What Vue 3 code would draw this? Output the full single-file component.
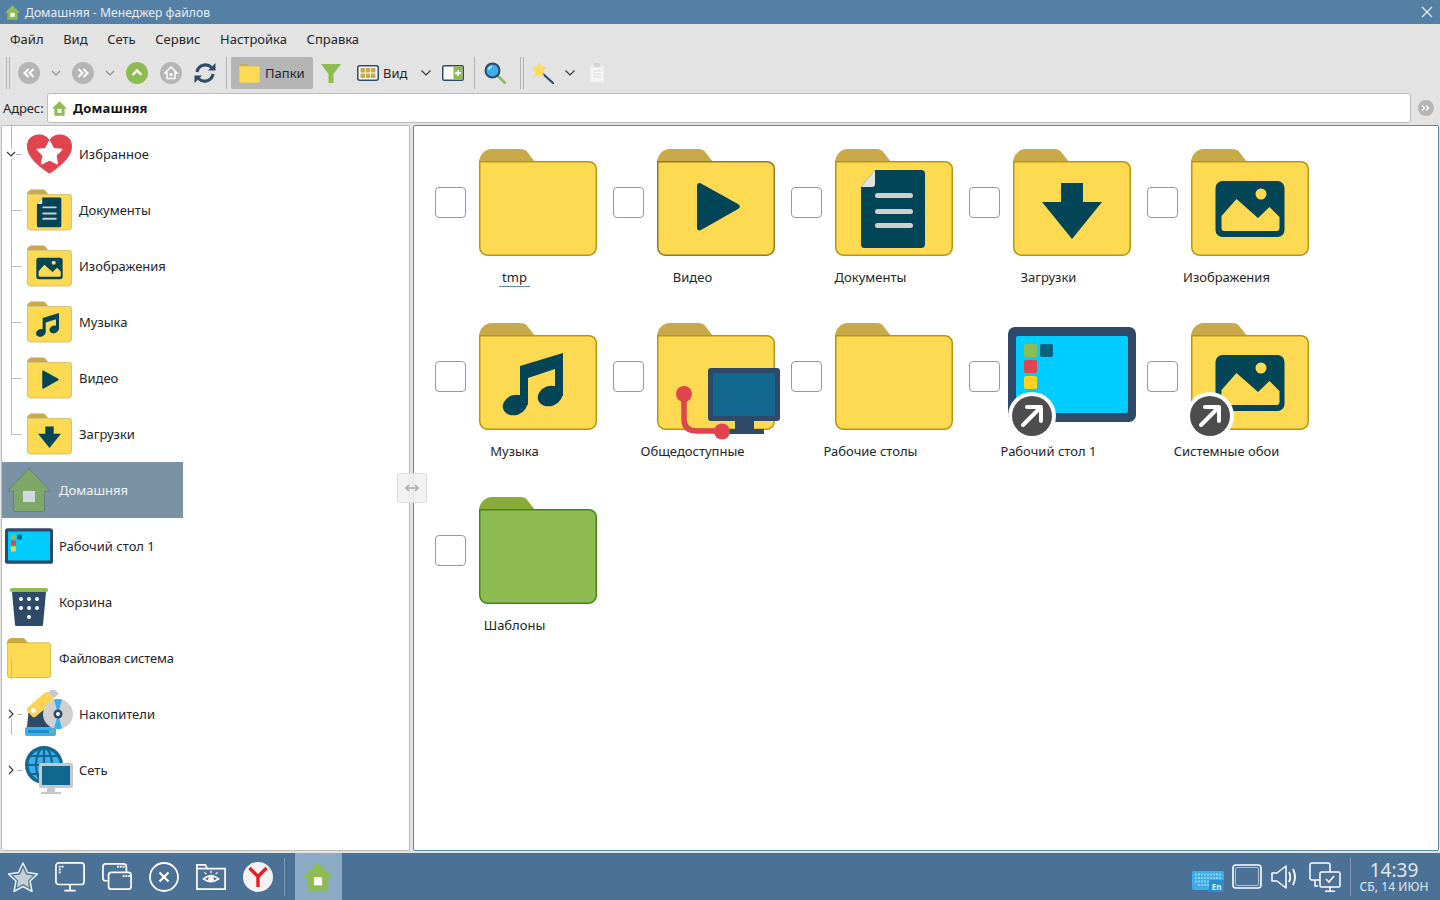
<script setup>
const menu = ['Файл', 'Вид', 'Сеть', 'Сервис', 'Настройка', 'Справка']
const V = '0 0 118 107'
const tree = [
  { label: 'Избранное', nested: true, art: ['heart'], vb: '0 -3 46 46', chev: 'down' },
  { label: 'Документы', nested: true, art: ['folder-soft', 'g-doc'], vb: V },
  { label: 'Изображения', nested: true, art: ['folder-soft', 'g-img'], vb: V },
  { label: 'Музыка', nested: true, art: ['folder-soft', 'g-music'], vb: V },
  { label: 'Видео', nested: true, art: ['folder-soft', 'g-video'], vb: V },
  { label: 'Загрузки', nested: true, art: ['folder-soft', 'g-down'], vb: V, last: true },
  { label: 'Домашняя', art: ['home-sel'], vb: '0 0 44 44', sel: true, size: 's44' },
  { label: 'Рабочий стол 1', art: ['desk'], vb: '-5 4 128 95' },
  { label: 'Корзина', art: ['trash'], vb: '0 0 48 48' },
  { label: 'Файловая система', art: ['folder'], vb: V, size: 's44', tight: true },
  { label: 'Накопители', nested: true, art: ['drives'], vb: '0 0 48 48', chev: 'right', size: 'wide', stub: true },
  { label: 'Сеть', nested: true, art: ['net'], vb: '0 0 48 48', chev: 'right', size: 'wide', stub: true }
]
const items = [
  { label: 'tmp', art: ['folder'], focus: true },
  { label: 'Видео', art: ['folder-dark', 'g-video'] },
  { label: 'Документы', art: ['folder', 'g-doc'] },
  { label: 'Загрузки', art: ['folder', 'g-down'] },
  { label: 'Изображения', art: ['folder', 'g-img'] },
  { label: 'Музыка', art: ['folder', 'g-music'] },
  { label: 'Общедоступные', art: ['folder', 'g-public'] },
  { label: 'Рабочие столы', art: ['folder'] },
  { label: 'Рабочий стол 1', art: ['desk', 'link'] },
  { label: 'Системные обои', art: ['folder', 'g-img', 'link'] },
  { label: 'Шаблоны', art: ['folder-green'] }
]
</script>

<template>
  <div class="app">
    <svg class="defs" aria-hidden="true">
      <defs>
        <g id="folder">
          <path d="M0 14C0 6 6 0 13 0H41C45 0 47 1 49 4L56 13H0Z" fill="#c9aa4a" />
          <path d="M.75 12.75H110A7.25 7.25 0 0 1 117.25 20V98A8 8 0 0 1 109 106.25H9A8 8 0 0 1 .75 98Z" fill="#feda53" stroke="#b8960f" stroke-width="1.5" />
        </g>
        <g id="folder-dark">
          <path d="M0 14C0 6 6 0 13 0H41C45 0 47 1 49 4L56 13H0Z" fill="#c9aa4a" />
          <path d="M.75 12.75H110A7.25 7.25 0 0 1 117.25 20V98A8 8 0 0 1 109 106.25H9A8 8 0 0 1 .75 98Z" fill="#feda53" stroke="#8f7a20" stroke-width="1.5" />
        </g>
        <g id="folder-soft">
          <path d="M0 14C0 6 6 0 13 0H41C45 0 47 1 49 4L56 13H0Z" fill="#c9aa4a" />
          <path d="M1.5 12.75H110A7 7 0 0 1 116.5 20V98A8 8 0 0 1 109 105.5H9A8 8 0 0 1 1.5 98Z" fill="#feda53" stroke="#d9c478" stroke-width="3" />
        </g>
        <g id="folder-green">
          <path d="M0 14C0 6 6 0 13 0H41C45 0 47 1 49 4L56 13H0Z" fill="#8aaa3a" />
          <path d="M.75 12.75H110A7.25 7.25 0 0 1 117.25 20V98A8 8 0 0 1 109 106.25H9A8 8 0 0 1 .75 98Z" fill="#8fbc52" stroke="#3f8a10" stroke-width="1.5" />
        </g>
        <g id="g-video"><path d="M40 37C40 34.500 42 33.500 44 34.500L81 55C83.500 56.500 83.500 58.500 81 60L44 81C42 82 40 81 40 79Z" fill="#014556" /></g>
        <g id="g-down"><path d="M48 34H70V53H89L59 90L29 53H48Z" fill="#014556" /></g>
        <g id="g-doc">
          <path d="M40 21H86Q90 21 90 25V95Q90 99 86 99H29Q26 99 26 95V38Z" fill="#014556" />
          <path d="M26 38L40 21V35Q40 38 37 38Z" fill="#e2e2e2" />
          <g fill="#cfcfcf"><rect x="40" y="44" width="38" height="5" rx="2.500" /><rect x="40" y="60" width="38" height="5" rx="2.500" /><rect x="40" y="74" width="38" height="5" rx="2.500" /></g>
        </g>
        <g id="g-img">
          <rect x="24.500" y="32" width="69" height="56" rx="7" fill="#014556" />
          <circle cx="70" cy="45" r="5.500" fill="#feda53" />
          <path d="M30.500 67L45.500 50L67 69L78.500 58L88.500 68V79Q88.500 82 85.500 82H33.500Q30.500 82 30.500 79Z" fill="#feda53" />
        </g>
        <g id="g-music">
          <ellipse cx="36" cy="82" rx="12.500" ry="10" transform="rotate(-20 36 82)" fill="#014556" />
          <ellipse cx="71" cy="73" rx="12.500" ry="10" transform="rotate(-20 71 73)" fill="#014556" />
          <path d="M41 43L84 30V73H76V46L49 55V82H41Z" fill="#014556" />
        </g>
        <g id="g-public">
          <path d="M27 71V96Q27 108 40 108H65" fill="none" stroke="#e0444f" stroke-width="5.500" />
          <circle cx="27" cy="71" r="8" fill="#e0444f" />
          <path d="M78 97H97V106H107V111H71V106H78Z" fill="#2e4a68" />
          <rect x="51" y="45" width="72" height="53" rx="3" fill="#2e4a68" />
          <rect x="56" y="50" width="62" height="43" fill="#12678f" />
          <circle cx="65" cy="108.500" r="8" fill="#e0444f" />
        </g>
        <g id="desk">
          <rect x="-5" y="4" width="128" height="95" rx="7" fill="#2e4a68" />
          <rect x="3" y="13" width="112" height="77" rx="2" fill="#00ccff" />
          <rect x="11" y="21" width="13" height="13" rx="2" fill="#8fbc52" />
          <rect x="27" y="21" width="13" height="13" rx="2" fill="#02647f" />
          <rect x="11" y="37" width="13" height="13" rx="2" fill="#e0444f" />
          <rect x="11" y="53" width="13" height="13" rx="2" fill="#ffd21e" />
        </g>
        <g id="link">
          <circle cx="19" cy="93" r="24" fill="#fff" />
          <circle cx="19" cy="93" r="20" fill="#4d4d4d" />
          <path d="M10 102L27 85M14 84H28V98" fill="none" stroke="#fff" stroke-width="4" stroke-linecap="round" stroke-linejoin="round" />
        </g>
        <g id="heart">
          <path d="M23 40C14 34 0 24 0 12C0 4 6 0 12 0C17 0 21 2 23 6C25 2 29 0 34 0C40 0 46 4 46 12C46 24 32 34 23 40Z" fill="#e0444f" />
          <path d="M23 7L27 14.500L35.500 15.500L29.500 21.500L31 30L23 26L15 30L16.500 21.500L10.500 15.500L19 14.500Z" fill="#fff" stroke="#fff" stroke-width="1.500" stroke-linejoin="round" />
        </g>
        <g id="home-sel">
          <path d="M22 0.500L43.500 23H37.500V42Q37.500 43.500 36 43.500H8Q6.500 43.500 6.500 42V23H.5Z" fill="#7fa868" stroke="#647f8c" />
          <rect x="16" y="23" width="12" height="11" fill="#d0d9e2" />
        </g>
        <g id="trash">
          <path d="M7 14H41L38 47Q38 48 36 48H12Q10 48 10 47Z" fill="#2e4a68" />
          <rect x="5" y="10" width="38" height="4" rx="2" fill="#8fbc52" />
          <g fill="#fff"><circle cx="16" cy="21" r="2" /><circle cx="24" cy="21" r="2" /><circle cx="32" cy="21" r="2" /><circle cx="16" cy="30" r="2" /><circle cx="24" cy="30" r="2" /><circle cx="32" cy="30" r="2" /><circle cx="24" cy="39" r="2" /></g>
        </g>
        <g id="drives">
          <path d="M4 18H27L30 37H2Z" fill="#2e4a68" />
          <rect y="37" width="31" height="9" rx="2" fill="#3daee9" />
          <rect x="3" y="40" width="21" height="3" rx="1" fill="#1a8cc7" />
          <circle cx="27" cy="41.500" r="1.500" fill="#8fbc52" />
          <g transform="rotate(-41 16 14)">
            <rect x="1" y="8" width="28" height="12" rx="3" fill="#fbd34e" />
            <rect x="29" y="10" width="7" height="8" fill="#c8c8c8" />
            <circle cx="6" cy="14" r="2.500" fill="#fff" />
          </g>
          <circle cx="33" cy="24" r="15" fill="#d0d0d0" />
          <path d="M29 9.500A15 15 0 0 1 37 9.500L33 24ZM29 38.500A15 15 0 0 0 37 38.500L33 24Z" fill="#3daee9" />
          <circle cx="33" cy="24" r="4.500" fill="#2e4a68" />
          <circle cx="33" cy="24" r="2" fill="#fff" />
        </g>
        <g id="net">
          <circle cx="19" cy="19" r="19" fill="#11688f" />
          <circle cx="19" cy="19" r="15.500" fill="#3daee9" />
          <g fill="none" stroke="#11688f" stroke-width="2.200"><ellipse cx="19" cy="19" rx="8" ry="17" /><path d="M19 2V36M2 19H36M5 10H33M5 28H33" /></g>
          <path d="M22 42H30V46H36V48H16V46H22Z" fill="#c8c8c8" />
          <rect x="14" y="17" width="34" height="25" rx="2" fill="#c8c8c8" />
          <rect x="17" y="20" width="28" height="19" fill="#12678f" />
        </g>
        <g id="home-green">
          <path d="M11 0L22 11H18.500V21H3.500V11H0Z" fill="#8fbc52" />
          <rect x="8" y="11" width="6" height="6" fill="#fff" />
        </g>
      </defs>
    </svg>

    <header class="title">
      <svg class="title-ico" viewBox="0 0 22 21"><use href="#home-green" /></svg>
      <span>Домашняя - Менеджер файлов</span>
      <svg class="close" viewBox="0 0 12 12"><path d="M1 1L11 11M11 1L1 11" stroke="#e8eff5" stroke-width="1.200" fill="none" /></svg>
    </header>

    <nav class="menu">
      <span v-for="m in menu" :key="m">{{ m }}</span>
    </nav>

    <div class="toolbar">
      <i class="grip" />
      <svg class="t22 m8" viewBox="0 0 22 22"><circle cx="11" cy="11" r="11" fill="#b5b5b5" /><path d="M10.500 7L6.500 11L10.500 15M15.500 7L11.500 11L15.500 15" fill="none" stroke="#fff" stroke-width="2" /></svg>
      <svg class="chev m8" viewBox="0 0 16 16"><path d="M4 6L8 10L12 6" fill="none" stroke="#8a8a8a" stroke-width="1.100" /></svg>
      <svg class="t22 m8" viewBox="0 0 22 22"><circle cx="11" cy="11" r="11" fill="#b5b5b5" /><path d="M6.500 7L10.500 11L6.500 15M11.500 7L15.500 11L11.500 15" fill="none" stroke="#fff" stroke-width="2" /></svg>
      <svg class="chev m8" viewBox="0 0 16 16"><path d="M4 6L8 10L12 6" fill="none" stroke="#8a8a8a" stroke-width="1.100" /></svg>
      <svg class="t22 m8" viewBox="0 0 22 22"><circle cx="11" cy="11" r="11" fill="#8fbc52" /><path d="M6.500 13L11 8.500L15.500 13" fill="none" stroke="#fff" stroke-width="2.400" /></svg>
      <svg class="t22 m12" viewBox="0 0 22 22"><circle cx="11" cy="11" r="11" fill="#b5b5b5" /><path d="M11 5L17 11H15V16.500H7V11H5Z" fill="none" stroke="#fff" stroke-width="1.500" /><rect x="9.500" y="11" width="3" height="3" fill="#fff" /></svg>
      <svg class="t22 m12" viewBox="0 0 22 22"><g fill="none" stroke="#2e4a68" stroke-width="3.200"><path d="M3 10A8.500 8.500 0 0 1 17.500 5.500" /><path d="M19 12A8.500 8.500 0 0 1 4.500 16.500" /></g><path d="M14 8.500H21.500V1Z" fill="#2e4a68" /><path d="M8 13.500H.5V21Z" fill="#2e4a68" /></svg>
      <i class="sep m10" />
      <div class="folders-btn">
        <svg class="btn-folder" viewBox="0 0 118 107"><use href="#folder-soft" /></svg>
        <span>Папки</span>
      </div>
      <svg class="t22 m7" viewBox="0 0 22 22"><path d="M1 2H21L13.500 12V21H8.500V12Z" fill="#8fbc52" /></svg>
      <svg class="view m15" viewBox="0 0 22 16"><rect x=".75" y=".75" width="20.500" height="14.500" rx="2" fill="#fff" stroke="#2e4a68" stroke-width="1.500" /><g fill="#c9aa4a"><rect x="3.500" y="3" width="4.500" height="4.500" /><rect x="8.800" y="3" width="4.500" height="4.500" /><rect x="14" y="3" width="4.500" height="4.500" /><rect x="3.500" y="8.500" width="4.500" height="4.500" /><rect x="8.800" y="8.500" width="4.500" height="4.500" /><rect x="14" y="8.500" width="4.500" height="4.500" /></g></svg>
      <span class="view-label">Вид</span>
      <svg class="chev m10" viewBox="0 0 16 16"><path d="M3.500 5.500L8 10L12.500 5.500" fill="none" stroke="#333" stroke-width="1.100" /></svg>
      <svg class="view m8" viewBox="0 0 22 16"><rect x=".75" y=".75" width="20.500" height="14.500" rx="1.500" fill="#fff" stroke="#2e4a68" stroke-width="1.500" /><rect x="11.500" y="1.500" width="9" height="13" fill="#8fbc52" /><path d="M16 5V11M13 8H19" stroke="#fff" stroke-width="1.800" /></svg>
      <i class="sep m10" />
      <svg class="t22 m9 search" viewBox="0 0 22 22"><path d="M13 13L21 21" stroke="#8fbc52" stroke-width="2.600" stroke-linecap="round" /><circle cx="8.500" cy="8.500" r="7" fill="#3daee9" stroke="#2e4a68" stroke-width="2" /><path d="M4.500 8A4 4 0 0 1 8 4.500" stroke="#bfe6fa" stroke-width="1.400" fill="none" /></svg>
      <i class="grip m14" />
      <svg class="t22 m8" viewBox="0 0 22 22"><path d="M11 12L21 21" stroke="#2e4a68" stroke-width="2.200" stroke-linecap="round" /><path d="M7 0L9.500 4.500L15 5.500L11 9.500L12 15L7 12.500L2 15L3.500 10L0 6L5 4.500Z" fill="#ffda55" /></svg>
      <svg class="chev m8" viewBox="0 0 16 16"><path d="M3.500 5.500L8 10L12.500 5.500" fill="none" stroke="#333" stroke-width="1.100" /></svg>
      <svg class="clip m10" viewBox="0 0 18 22"><rect x="1" y="3" width="16" height="18.500" rx="1.500" fill="#ececec" stroke="#e0e0e0" /><rect x="3.500" y="6" width="11" height="13" fill="#f6f6f6" /><rect x="6" y="1" width="6" height="4" rx="1" fill="#d2d2d2" /><path d="M5 9H13M5 12H13M5 15H13" stroke="#d8d8d8" /></svg>
    </div>

    <div class="address">
      <span class="addr-label">Адрес:</span>
      <div class="addr-box">
        <svg class="addr-ico" viewBox="0 0 22 21"><use href="#home-green" /></svg>
        <b>Домашняя</b>
      </div>
      <svg class="addr-go" viewBox="0 0 16 16"><circle cx="8" cy="8" r="8" fill="#b5b5b5" /><path d="M4 5.500L6.500 8L4 10.500M8 5.500L10.500 8L8 10.500" fill="none" stroke="#fff" stroke-width="1.300" /></svg>
    </div>

    <main class="main">
      <aside class="pane left">
        <div v-for="r in tree" :key="r.label" class="row" :class="{ nested: r.nested, sel: r.sel, last: r.last, stub: r.stub }">
          <svg v-if="r.chev === 'down'" class="tw" viewBox="0 0 10 10"><path d="M1 3L5 7L9 3" fill="none" stroke="#333" stroke-width="1.100" /></svg>
          <svg v-if="r.chev === 'right'" class="tw" viewBox="0 0 10 10"><path d="M3 1L7 5L3 9" fill="none" stroke="#333" stroke-width="1.100" /></svg>
          <span class="ibox" :class="r.size">
            <svg :viewBox="r.vb"><use v-for="a in r.art" :key="a" :href="'#' + a" /></svg>
          </span>
          <span class="rtext" :class="{ tight: r.tight }">{{ r.label }}</span>
        </div>
      </aside>

      <section class="pane right">
        <div class="grid">
          <div v-for="it in items" :key="it.label" class="cell">
            <div class="cell-top">
              <i class="check" />
              <svg class="big" viewBox="0 0 118 107"><use v-for="a in it.art" :key="a" :href="'#' + a" /></svg>
            </div>
            <div class="cap"><span :class="{ focus: it.focus }">{{ it.label }}</span></div>
          </div>
        </div>
      </section>

      <div class="split-handle">
        <svg viewBox="0 0 14 8"><path d="M1 4H13M4 1L1 4L4 7M10 1L13 4L10 7" fill="none" stroke="#a9a9a9" stroke-width="1.500" /></svg>
      </div>
    </main>

    <footer class="task">
      <svg class="k30" viewBox="0 0 30 30"><path d="M15 1L19.500 10.500L29.500 12L22 19L24 29.500L15 24.500L6 29.500L8 19L.5 12L10.500 10.500Z" fill="none" stroke="#eef3f7" stroke-width="1.500" stroke-linejoin="round" /><path d="M15 6L18 12.500L25 13.500L20 18.500L21 25.500L15 22L9 25.500L10 18.500L5 13.500L12 12.500Z" fill="#c5ced6" /></svg>
      <svg class="k32 mt16" viewBox="0 0 32 32"><g fill="none" stroke="#fff" stroke-width="1.800"><rect x="1" y="1" width="30" height="23" rx="3" /><path d="M16 24V30M10 30.500H22" /></g><g fill="#fff"><rect x="4" y="4" width="2" height="2" /><rect x="7" y="4" width="2" height="2" /><rect x="4" y="7" width="2" height="2" /><rect x="4" y="10" width="2" height="2" /></g></svg>
      <svg class="k32 mt15" viewBox="0 0 32 32"><g fill="none" stroke="#fff" stroke-width="1.800"><path d="M6 20H4Q1 20 1 17V5Q1 2 4 2H23Q26 2 26 5V11" /><rect x="7" y="11" width="24" height="18" rx="3" fill="#4c7196" /></g><g fill="#fff"><rect x="16" y="4" width="2" height="2" /><rect x="19" y="4" width="2" height="2" /><rect x="22" y="4" width="2" height="2" /><rect x="22" y="14" width="2" height="2" /><rect x="25" y="14" width="2" height="2" /><rect x="28" y="14" width="2" height="2" /></g></svg>
      <svg class="k30 mt16" viewBox="0 0 30 30"><circle cx="15" cy="15" r="14" fill="none" stroke="#fff" stroke-width="1.800" /><path d="M10.500 10.500L19.500 19.500M19.500 10.500L10.500 19.500" stroke="#fff" stroke-width="2.200" /></svg>
      <svg class="k32 mt16" viewBox="0 0 32 32"><g fill="none" stroke="#fff" stroke-width="1.800"><path d="M1 29V3H10L12 7H31V29Z" /><path d="M1 7H12" /><path d="M8 18Q16 11 24 18Q16 24 8 18Z" /></g><circle cx="16" cy="18" r="3" fill="#fff" /><path d="M9 11L11 13M16 9V12M23 11L21 13" stroke="#fff" stroke-width="1.300" /></svg>
      <svg class="k30 mt16" viewBox="0 0 30 30"><circle cx="15" cy="15" r="15" fill="#f3f3f3" /><path d="M6.500 6L15 14.500L23.500 6M15 14V25" fill="none" stroke="#e31e24" stroke-width="3.400" /></svg>
      <i class="task-sep mt11" />
      <div class="task-active">
        <svg viewBox="0 0 22 21"><use href="#home-green" /></svg>
      </div>
      <div class="tray">
        <svg class="k32" viewBox="0 0 32 30">
          <path d="M3 9C5 2 11 3 15 5C19 7 25 5 26 0" fill="none" stroke="#2b7fb3" stroke-width="1.300" />
          <rect y="9" width="32" height="19" rx="2" fill="#3daee9" />
          <g stroke="#8ad0f3" stroke-width="2" stroke-dasharray="2 1" fill="none"><path d="M3 12.500H29" /><path d="M3 16H29" /><path d="M3 19.500H29" /><path d="M6 23H26" /></g>
          <rect x="17" y="18" width="15" height="12" fill="#2a8fce" />
          <text x="24.500" y="27.500" text-anchor="middle" class="en">En</text>
        </svg>
        <svg class="screen mt8" viewBox="0 0 30 25"><rect x="1" y="1" width="28" height="23" rx="3" fill="none" stroke="#fff" stroke-width="1.600" /><rect x="3.500" y="3.500" width="23" height="18" rx="1.500" fill="none" stroke="#fff" stroke-opacity=".55" /></svg>
        <svg class="speaker mt9" viewBox="0 0 26 26"><path d="M1 9H6L15 2V24L6 17H1Z" fill="none" stroke="#fff" stroke-width="1.500" stroke-linejoin="round" /><path d="M18 8Q20.500 13 18 18M22 5Q26 13 22 21" fill="none" stroke="#fff" stroke-width="1.800" /></svg>
        <svg class="k32 mt12" viewBox="0 0 32 30"><g fill="none" stroke="#fff" stroke-width="1.500"><path d="M11 18H3Q1 18 1 16V3Q1 1 3 1H19Q21 1 21 3V10" /><rect x="11" y="10" width="20" height="15" rx="1.500" fill="#4c7196" /><path d="M21 25V29M16 29.250H26M6 18V24H9" /></g><path d="M17 17L20 20L25 14" fill="none" stroke="#fff" stroke-width="1.600" /></svg>
        <i class="task-sep mt9" />
        <div class="clock">
          <div class="time">14:39</div>
          <div class="date">СБ, 14 ИЮН</div>
        </div>
      </div>
    </footer>
  </div>
</template>

<style>
html, body { margin: 0; padding: 0; overflow: hidden; background: #e3e3e3; }
</style>

<style scoped>
.app { width: 1440px; height: 900px; display: flex; flex-direction: column; font-family: "Noto Sans", sans-serif; font-size: 13px; color: #232629; background: #e3e3e3; overflow: hidden; }
.defs { display: block; width: 0; height: 0; }
svg { display: block; flex: none; }
i { display: block; flex: none; }

.title { height: 24px; flex: none; background: #5580a5; color: #e6eef5; display: flex; align-items: center; padding: 0 7px 0 5px; font-size: 12.200px; }
.title-ico { width: 15px; height: 15px; margin-right: 5px; }
.close { width: 12px; height: 12px; margin-left: auto; margin-right: 0; }

.menu { height: 30px; flex: none; display: flex; align-items: center; gap: 19.600px; padding-left: 10px; }

.toolbar { height: 38px; flex: none; display: flex; align-items: center; padding-left: 6px; }
.grip { width: 4px; height: 32px; border-left: 1px solid #b3b3b3; border-right: 1px solid #b3b3b3; box-sizing: border-box; }
.sep { width: 1px; height: 32px; background: #b3b3b3; }
.t22 { width: 22px; height: 22px; }
.chev { width: 16px; height: 16px; }
.m7 { margin-left: 7px; }
.m8 { margin-left: 8px; }
.m9 { margin-left: 9px; }
.m10 { margin-left: 10px; }
.m12 { margin-left: 12px; }
.m14 { margin-left: 14px; }
.m15 { margin-left: 15px; }
.folders-btn { margin-left: 4px; width: 82px; height: 32px; border-radius: 2px; background: #b5b5b5; display: flex; align-items: center; padding-left: 8px; box-sizing: border-box; gap: 5px; }
.btn-folder { width: 21px; height: 19px; }
.view { width: 22px; height: 16px; }
.view-label { margin-left: 4px; width: 25px; }
.clip { width: 18px; height: 22px; }

.address { height: 32px; flex: none; display: flex; align-items: center; padding-left: 3px; }
.addr-label { width: 44px; letter-spacing: -.1px; }
.addr-box { width: 1364px; height: 30px; box-sizing: border-box; background: #fff; border: 1px solid #bdbdbd; border-radius: 3px; display: flex; align-items: center; padding-left: 3px; }
.addr-ico { width: 15px; height: 15px; margin-left: 1px; margin-right: 6px; }
.addr-box b { font-weight: 700; color: #111; letter-spacing: .15px; }
.addr-go { width: 16px; height: 16px; margin-left: 7px; }

.main { flex: 1; min-height: 0; position: relative; display: flex; padding: 1px 1px 2px 1px; gap: 3px; }
.pane { background: #fff; box-sizing: border-box; border-radius: 2px; }
.left { width: 409px; border: 1px solid #bcbcbc; }
.right { flex: 1; border: 1px solid #5a8ab0; }

.row { position: relative; width: 181px; height: 56px; display: flex; align-items: center; padding-left: 3px; box-sizing: border-box; }
.row.nested { padding-left: 24px; }
.row.sel { background: #7b92a4; color: #eef2f5; }
.tight { letter-spacing: -.2px; white-space: nowrap; }
.ibox { width: 48px; height: 48px; display: flex; align-items: center; justify-content: center; flex: none; margin-right: 6px; }
.ibox svg { width: 48px; height: 48px; }
.ibox.s44 svg { width: 44px; height: 44px; }
.nested .ibox { width: 46px; margin-right: 7px; }
.nested .ibox svg { width: 45px; height: 46px; }
.nested .ibox.wide svg { width: 48px; height: 48px; margin: 0 -1px; }
.row.nested::before { content: ""; position: absolute; left: 9px; top: -28px; height: 56px; width: 10px; border-left: 1px solid #bcbcbc; border-bottom: 1px solid #bcbcbc; }
.row.nested:first-child::before { top: -2px; height: 30px; }
.row.stub::before { top: -27px; height: 20px; width: 0; border-bottom: 0; }
.row.stub::after { content: ""; position: absolute; left: 15px; top: 28px; width: 5px; border-top: 1px solid #bcbcbc; }
.tw { position: absolute; left: 4px; top: 23px; width: 10px; height: 10px; background: #fff; z-index: 1; }

.grid { display: grid; grid-template-columns: repeat(5, 178px); grid-auto-rows: 174px; padding: 23px 0 0 21px; }
.cell-top { height: 107px; display: flex; align-items: center; gap: 13px; }
.check { width: 31px; height: 31px; box-sizing: border-box; border: 1px solid #999; border-radius: 4px; background: #fff; }
.big { width: 118px; height: 107px; overflow: visible; }
.cap { width: 159px; margin-top: 12px; text-align: center; line-height: 18px; }
.focus { display: inline-block; padding: 0 3px; border-bottom: 1px solid #5a8ab0; line-height: 17px; }

.split-handle { position: absolute; left: 397px; top: 349px; width: 30px; height: 30px; box-sizing: border-box; border: 1px solid #dedede; border-radius: 2px; background: rgba(240, 240, 240, .85); display: flex; align-items: center; justify-content: center; }
.split-handle svg { width: 14px; height: 8px; }

.task { height: 47px; flex: none; background: #4c7196; display: flex; align-items: center; padding-left: 8px; }
.k30 { width: 30px; height: 30px; }
.k32 { width: 32px; height: 30px; }
.mt8 { margin-left: 8px; }
.mt9 { margin-left: 9px; }
.mt11 { margin-left: 11px; }
.mt12 { margin-left: 12px; }
.mt15 { margin-left: 15px; }
.mt16 { margin-left: 16px; }
.task-sep { width: 1px; height: 38px; background: #7d9bb5; }
.task-active { margin-left: 10px; width: 47px; height: 47px; background: #8baac4; display: flex; align-items: center; justify-content: center; }
.task-active svg { width: 30px; height: 29px; margin-left: -1px; }
.tray { margin-left: auto; display: flex; align-items: center; }
.screen { width: 30px; height: 25px; }
.speaker { width: 26px; height: 26px; }
.clock { width: 89px; padding-right: 3px; box-sizing: border-box; text-align: center; color: #dfe8f0; }
.time { font-size: 19px; line-height: 20px; }
.date { font-size: 12px; line-height: 13px; letter-spacing: .1px; }
.en { font-family: "Noto Sans", sans-serif; font-size: 8px; font-weight: 700; fill: #e8f6fd; }
</style>
